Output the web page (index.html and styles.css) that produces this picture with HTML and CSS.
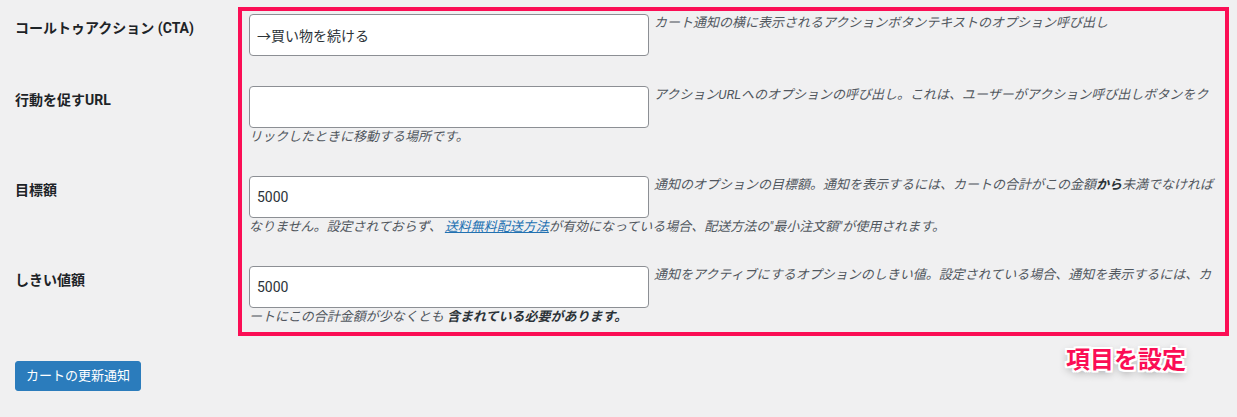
FILE: index.html
```html
<!DOCTYPE html>
<html lang="ja">
<head>
<meta charset="utf-8">
<title>カート通知設定</title>
<link rel="stylesheet" href="styles.css">
</head>
<body>
<div class="settings">
  <div class="row row-first">
    <div class="label">コールトゥアクション (CTA)</div>
    <div class="field"><input class="text-input" type="text" value="→買い物を続ける"><span class="description">カート通知の横に表示されるアクションボタンテキストのオプション呼び出し</span></div>
  </div>
  <div class="row">
    <div class="label">行動を促すURL</div>
    <div class="field"><input class="text-input" type="text" value=""><span class="description">アクションURLへのオプションの呼び出し。これは、ユーザーがアクション呼び出しボタンをクリックしたときに移動する場所です。</span></div>
  </div>
  <div class="row">
    <div class="label">目標額</div>
    <div class="field"><input class="text-input" type="text" value="5000"><span class="description">通知のオプションの目標額。通知を表示するには、カートの合計がこの金額<strong>から</strong>未満でなければなりません。設定されておらず、 <a class="link" href="#">送料無料配送方法</a>が有効になっている場合、配送方法の"最小注文額"が使用されます。</span></div>
  </div>
  <div class="row row-last">
    <div class="label">しきい値額</div>
    <div class="field"><input class="text-input" type="text" value="5000"><span class="description">通知をアクティブにするオプションのしきい値。設定されている場合、通知を表示するには、カートにこの合計金額が少なくとも <strong>含まれている必要があります。</strong></span></div>
  </div>
</div>
<div class="footer">
  <button class="primary-button" type="button">カートの更新通知</button>
  <div class="annotation">項目を設定</div>
</div>
</body>
</html>
```

FILE: styles.css
```css
html, body {
  margin: 0;
  padding: 0;
}

body {
  background: #f0f0f1;
  font-family: "Roboto", "Noto Sans CJK JP", sans-serif;
  color: #1d2327;
  width: 1237px;
  height: 417px;
  overflow: hidden;
}

.settings {
  padding-top: 7px;
}

.row {
  display: grid;
  grid-template-columns: 238px 991px;
}

.label {
  padding: 20px 0 0 15px;
  font-size: 14px;
  font-weight: 700;
  line-height: 1.3;
  color: #1d2327;
}

.field {
  border-left: 4px solid #fb0e55;
  border-right: 4px solid #fb0e55;
  padding: 15px 7px 15px 7px;
  font-size: 13px;
  line-height: 18px;
}

.row-first .label {
  padding-top: 12px;
}

.row-first .field {
  border-top: 4px solid #fb0e55;
  padding-top: 3px;
}

.row-last .field {
  border-bottom: 4px solid #fb0e55;
  padding-bottom: 6px;
}

.text-input {
  box-sizing: border-box;
  width: 400px;
  height: 42px;
  margin: 0 5px 0 0;
  padding: 0 7px;
  border: 1px solid #8c8f94;
  border-radius: 4px;
  background: #fff;
  color: #2c3338;
  font-family: "Roboto", "Noto Sans CJK JP", sans-serif;
  font-size: 14px;
  vertical-align: top;
  outline: none;
}

.description {
  font-style: italic;
  color: #50575e;
}

.description strong {
  font-weight: 700;
  color: #2c3338;
}

.link {
  color: #2271b1;
  text-decoration: underline;
}

.footer {
  display: flex;
  align-items: flex-start;
  padding-left: 15px;
}

.primary-button {
  margin-top: 25px;
  height: 30px;
  padding: 0 10px;
  border: 1px solid #2b7cbc;
  border-radius: 3px;
  background: #2b7cbc;
  color: #fff;
  font-family: "Roboto", "Noto Sans CJK JP", sans-serif;
  font-size: 13px;
  line-height: 28px;
}

.annotation {
  margin: 12px 51px 0 auto;
  font-size: 24px;
  line-height: 1;
  font-weight: 700;
  color: #fb0e55;
  text-shadow:
    2px 0 0 #fff, -2px 0 0 #fff, 0 2px 0 #fff, 0 -2px 0 #fff,
    2px 2px 0 #fff, -2px -2px 0 #fff, 2px -2px 0 #fff, -2px 2px 0 #fff,
    0 3px 8px rgba(0, 0, 0, 0.45);
}
```
